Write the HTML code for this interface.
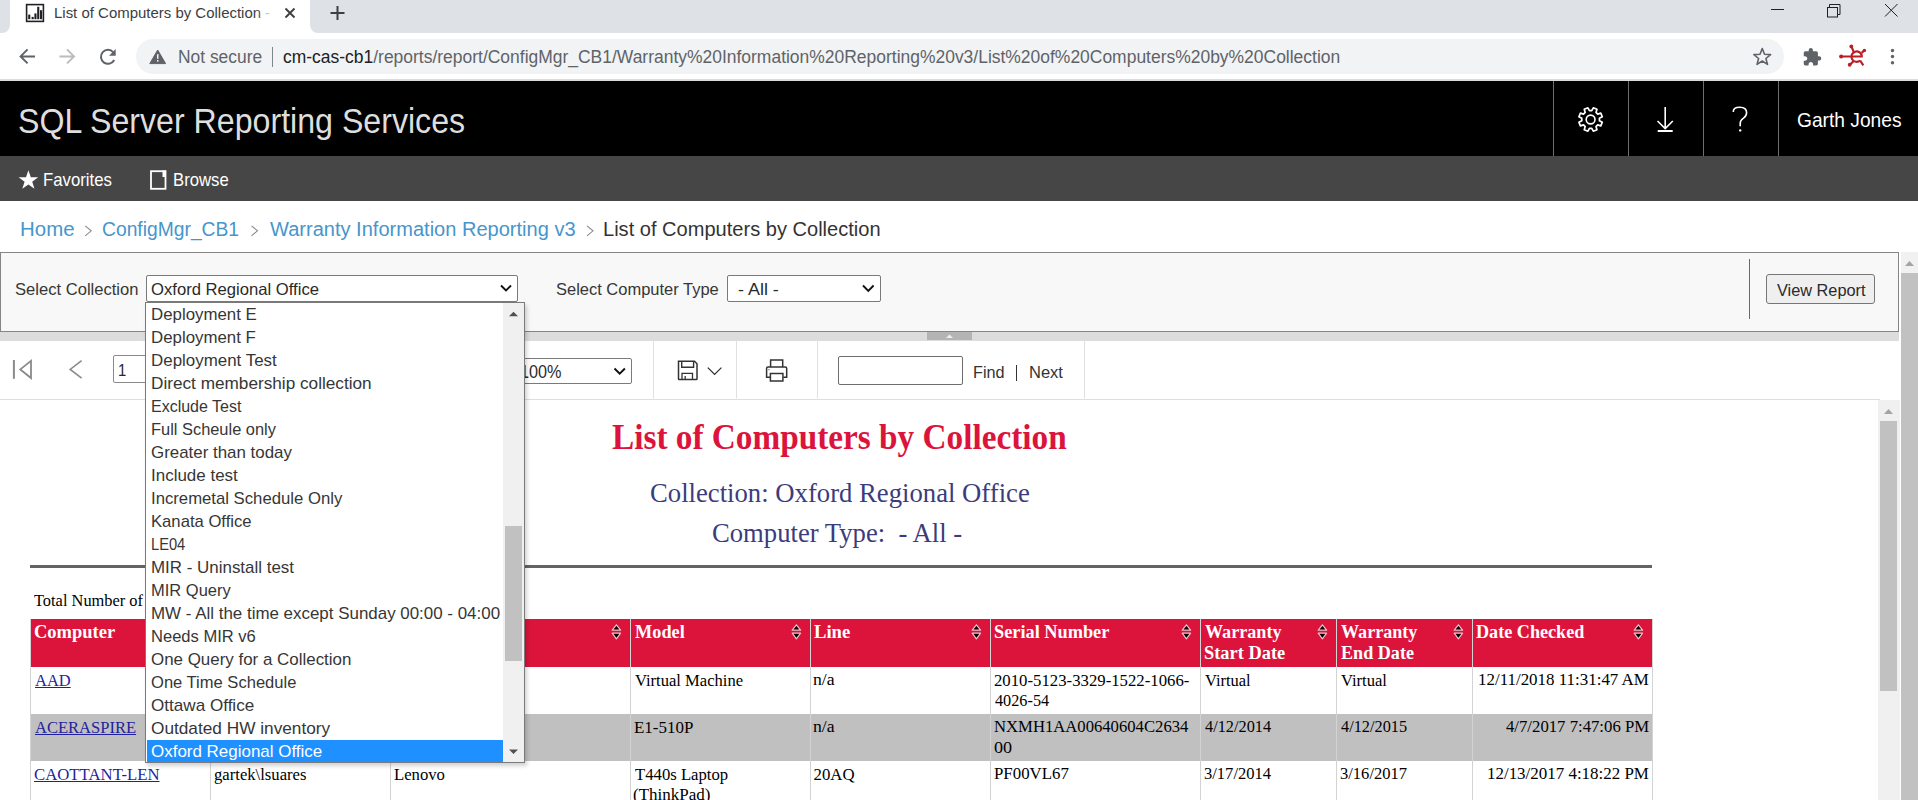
<!DOCTYPE html>
<html><head><meta charset="utf-8">
<style>
*{box-sizing:border-box;margin:0;padding:0}
html,body{width:1918px;height:800px;overflow:hidden;background:#fff;font-family:"Liberation Sans",sans-serif}
body{position:relative}
.a{position:absolute}
.t{position:absolute;white-space:pre;transform-origin:0 0}
svg{position:absolute;overflow:visible}
</style></head><body>

<!-- ===== Chrome tab strip ===== -->
<div class="a" style="left:0;top:0;width:1918px;height:34px;background:#fff"></div>
<div class="a" style="left:0;top:0;width:10px;height:33px;background:#dee1e6;border-bottom-right-radius:8px"></div>
<div class="a" style="left:310px;top:0;width:1608px;height:33px;background:#dee1e6;border-bottom-left-radius:8px"></div>
<!-- favicon -->
<svg style="left:0;top:0" width="60" height="30">
  <rect x="26.6" y="4.6" width="16.8" height="16.8" fill="none" stroke="#202124" stroke-width="1.6"/>
  <rect x="28.2" y="14.6" width="2.1" height="4.6" fill="#202124"/>
  <rect x="31.6" y="16.9" width="2.1" height="2.3" fill="#202124"/>
  <rect x="34.4" y="13.4" width="2.1" height="5.8" fill="#202124"/>
  <rect x="37.2" y="6.8" width="2.1" height="12.4" fill="#202124"/>
  <rect x="40.0" y="10.2" width="2.1" height="9" fill="#202124"/>
</svg>
<div class="t" style="left:54.44px;top:5.20px;font-family:'Liberation Sans',sans-serif;font-weight:400;font-size:15.55px;line-height:15.55px;color:#3c4043;transform:scaleX(0.9623);">List of Computers by Collection -</div>
<div class="a" style="left:257px;top:0;width:20px;height:30px;background:linear-gradient(90deg,rgba(255,255,255,0),#fff 75%)"></div>
<svg style="left:0;top:0" width="360" height="30">
  <path d="M285.5 8.5 L294.5 17.5 M294.5 8.5 L285.5 17.5" stroke="#3c4043" stroke-width="1.9" fill="none"/>
  <path d="M337.5 6 V20 M330.5 13 H344.5" stroke="#3c4043" stroke-width="2" fill="none"/>
</svg>
<!-- window controls -->
<svg style="left:1700px;top:0" width="218" height="30">
  <path d="M71 9.5 H84" stroke="#202124" stroke-width="1"/>
  <rect x="127.5" y="7.5" width="10" height="9.5" fill="none" stroke="#202124" stroke-width="1"/>
  <path d="M129.5 7.5 V4.5 H140 V14.5 H137.5" fill="none" stroke="#202124" stroke-width="1"/>
  <path d="M185 4 L197.5 16.5 M197.5 4 L185 16.5" stroke="#202124" stroke-width="1"/>
</svg>

<!-- ===== Toolbar ===== -->
<svg style="left:0;top:34px" width="140" height="46">
  <path d="M35 22.4 H21 M27.6 15.4 L20.6 22.4 L27.6 29.4" stroke="#5f6368" stroke-width="2" fill="none"/>
  <path d="M59.5 22.4 H73.5 M67 15.4 L74 22.4 L67 29.4" stroke="#babcbe" stroke-width="2" fill="none"/>
  <path d="M113.3 18.3 A7 7 0 1 0 114.2 26" stroke="#5f6368" stroke-width="2" fill="none"/>
  <path d="M109 21.8 L115.7 21.8 L115.7 15 Z" fill="#5f6368"/>
</svg>
<div class="a" style="left:136px;top:39px;width:1648px;height:34.5px;background:#f1f3f4;border-radius:17.25px"></div>
<svg style="left:140px;top:40px" width="40" height="30">
  <path d="M17.7 10 L25.6 23.6 L9.8 23.6 Z" fill="#5f6368" stroke="#5f6368" stroke-width="1" stroke-linejoin="round"/>
  <rect x="17" y="14.2" width="1.5" height="4.6" fill="#f1f3f4"/>
  <rect x="17" y="20" width="1.5" height="1.6" fill="#f1f3f4"/>
</svg>
<div class="t" style="left:177.68px;top:48.10px;font-family:'Liberation Sans',sans-serif;font-weight:400;font-size:18.9px;line-height:18.9px;color:#5f6368;transform:scaleX(0.9211);">Not secure</div>
<div class="a" style="left:271.5px;top:47px;width:1.3px;height:20px;background:#80868b"></div>
<div class="t" style="left:283.48px;top:48.10px;font-family:'Liberation Sans',sans-serif;font-weight:400;font-size:18.9px;line-height:18.9px;color:#202124;transform:scaleX(0.9243);">cm-cas-cb1<span style="color:#5f6368">/reports/report/ConfigMgr_CB1/Warranty%20Information%20Reporting%20v3/List%20of%20Computers%20by%20Collection</span></div>
<svg style="left:1745px;top:38px" width="173" height="40">
  <path d="M17.25 10.5 L19.5 16.3 L25.6 16.6 L20.9 20.5 L22.5 26.4 L17.25 23 L12 26.4 L13.6 20.5 L8.9 16.6 L15 16.3 Z" fill="none" stroke="#5f6368" stroke-width="1.6" stroke-linejoin="round"/>
  <path transform="translate(57.08,9.17) scale(0.833)" d="M20.5 11H19V7c0-1.1-.9-2-2-2h-4V3.5C13 2.12 11.88 1 10.5 1S8 2.12 8 3.5V5H4c-1.1 0-1.99.9-1.99 2v3.8H3.5c1.49 0 2.7 1.21 2.7 2.7s-1.21 2.7-2.7 2.7H2V20c0 1.1.9 2 2 2h3.8v-1.5c0-1.49 1.21-2.7 2.7-2.7 1.49 0 2.7 1.21 2.7 2.7V22H17c1.1 0 2-.9 2-2v-4h1.5c1.38 0 2.5-1.12 2.5-2.5S21.880 11 20.5 11z" fill="#5f6368"/>
  <g stroke="#b81f24" stroke-width="2.1" fill="none">
    <path d="M96.1 18.5 H116.8 A5.2 5.2 0 1 0 115.2 22.4"/>
    <path d="M106.3 8.4 L108.9 14.2"/>
    <path d="M116.6 14.9 L119.4 12.4"/>
    <path d="M104.7 26.75 L108.2 23.6"/>
    <path d="M115.2 22.55 L118.35 27.3"/>
  </g>
  <circle cx="96.1" cy="18.5" r="2" fill="#b81f24"/>
  <circle cx="106.3" cy="8.4" r="1.9" fill="#b81f24"/>
  <circle cx="104.7" cy="26.75" r="1.9" fill="#b81f24"/>
  <circle cx="119.4" cy="12.4" r="1.7" fill="#b81f24"/>
  <circle cx="147.5" cy="12.5" r="1.7" fill="#5f6368"/>
  <circle cx="147.5" cy="18.5" r="1.7" fill="#5f6368"/>
  <circle cx="147.5" cy="24.7" r="1.7" fill="#5f6368"/>
</svg>
<div class="a" style="left:0;top:78.5px;width:1918px;height:2px;background:#dcdcdc"></div>

<!-- ===== SSRS header ===== -->
<div class="a" style="left:0;top:80.5px;width:1918px;height:75.5px;background:#000"></div>
<div class="t" style="left:18.13px;top:103.60px;font-family:'Liberation Sans',sans-serif;font-weight:400;font-size:34.45px;line-height:34.45px;color:#dedede;transform:scaleX(0.9332);">SQL Server Reporting Services</div>
<div class="a" style="left:1553px;top:81px;width:1px;height:75px;background:#6e6e6e"></div>
<div class="a" style="left:1628px;top:81px;width:1px;height:75px;background:#6e6e6e"></div>
<div class="a" style="left:1703px;top:81px;width:1px;height:75px;background:#6e6e6e"></div>
<div class="a" style="left:1778px;top:81px;width:1px;height:75px;background:#6e6e6e"></div>
<svg style="left:1560px;top:90px" width="130" height="50">
  <g transform="translate(30.6,29.5)">
    <path d="M8.82 1.16 L11.69 2.70 L10.18 6.36 L7.06 5.42 L5.42 7.06 L6.36 10.18 L2.70 11.69 L1.16 8.82 L-1.16 8.82 L-2.70 11.69 L-6.36 10.18 L-5.42 7.06 L-7.06 5.42 L-10.18 6.36 L-11.69 2.70 L-8.82 1.16 L-8.82 -1.16 L-11.69 -2.70 L-10.18 -6.36 L-7.06 -5.42 L-5.42 -7.06 L-6.36 -10.18 L-2.70 -11.69 L-1.16 -8.82 L1.16 -8.82 L2.70 -11.69 L6.36 -10.18 L5.42 -7.06 L7.06 -5.42 L10.18 -6.36 L11.69 -2.70 L8.82 -1.16 Z" fill="none" stroke="#fff" stroke-width="1.7" stroke-linejoin="round"/>
    <circle r="4.4" fill="none" stroke="#fff" stroke-width="1.6"/>
  </g>
  <path d="M105.2 17 V38.5 M97.5 31 L105.2 38.6 L112.8 31" stroke="#fff" stroke-width="1.6" fill="none"/>
  <path d="M97.7 41 H112.7" stroke="#fff" stroke-width="2"/>
</svg>
<svg style="left:1725px;top:100px" width="30" height="40">
  <path d="M8.3 12 Q8 7.3 14.8 7.3 Q21.6 7.3 21.6 12.8 Q21.6 16 18.5 18.2 Q15.2 20.3 15.2 23.5 V26.3" fill="none" stroke="#fff" stroke-width="1.6"/>
  <circle cx="15.2" cy="30.4" r="1.2" fill="#fff"/>
</svg>
<div class="t" style="left:1797.02px;top:110.80px;font-family:'Liberation Sans',sans-serif;font-weight:400;font-size:19.62px;line-height:19.62px;color:#ffffff;transform:scaleX(0.9781);">Garth Jones</div>

<!-- ===== Nav bar ===== -->
<div class="a" style="left:0;top:156px;width:1918px;height:45px;background:#464646"></div>
<svg style="left:0;top:156px" width="240" height="45">
  <path d="M28.4 14.2 L30.8 21.3 L38.2 21.3 L32.2 25.7 L34.5 32.8 L28.4 28.4 L22.3 32.8 L24.6 25.7 L18.6 21.3 L26 21.3 Z" fill="#fff"/>
  <rect x="151" y="15.2" width="14.5" height="17.6" fill="none" stroke="#fff" stroke-width="1.8"/>
  <rect x="162.5" y="14.5" width="3.5" height="6.5" fill="#fff"/>
</svg>
<div class="t" style="left:42.70px;top:170.80px;font-family:'Liberation Sans',sans-serif;font-weight:400;font-size:18.6px;line-height:18.6px;color:#ffffff;transform:scaleX(0.9000);">Favorites</div>
<div class="t" style="left:172.80px;top:170.80px;font-family:'Liberation Sans',sans-serif;font-weight:400;font-size:18.6px;line-height:18.6px;color:#ffffff;transform:scaleX(0.8983);">Browse</div>

<!-- ===== Breadcrumb ===== -->
<div class="t" style="left:19.63px;top:219.80px;font-family:'Liberation Sans',sans-serif;font-weight:400;font-size:19.77px;line-height:19.77px;color:#4696cc;transform:scaleX(1.0340);">Home</div>
<div class="t" style="left:102.03px;top:219.80px;font-family:'Liberation Sans',sans-serif;font-weight:400;font-size:19.77px;line-height:19.77px;color:#4696cc;transform:scaleX(0.9748);">ConfigMgr_CB1</div>
<div class="t" style="left:269.80px;top:219.80px;font-family:'Liberation Sans',sans-serif;font-weight:400;font-size:19.77px;line-height:19.77px;color:#4696cc;transform:scaleX(1.0140);">Warranty Information Reporting v3</div>
<div class="t" style="left:603.37px;top:219.80px;font-family:'Liberation Sans',sans-serif;font-weight:400;font-size:19.77px;line-height:19.77px;color:#333333;transform:scaleX(1.0148);">List of Computers by Collection</div>
<svg style="left:0;top:220px" width="620" height="20">
  <g stroke="#8a8a8a" stroke-width="1.1" fill="none">
    <path d="M85.2 5.8 L91.2 10.8 L85.2 15.8"/>
    <path d="M251.5 5.8 L257.5 10.8 L251.5 15.8"/>
    <path d="M587 5.8 L593 10.8 L587 15.8"/>
  </g>
</svg>

<!-- ===== Parameter panel ===== -->
<div class="a" style="left:0;top:252px;width:1899px;height:80px;background:#f8f8f8;border:1px solid #858585"></div>
<div class="t" style="left:14.61px;top:282.20px;font-family:'Liberation Sans',sans-serif;font-weight:400;font-size:16.72px;line-height:16.72px;color:#363636;transform:scaleX(0.9926);">Select Collection</div>
<div class="a" style="left:145.5px;top:275px;width:372.5px;height:26.5px;background:#fff;border:1px solid #7a7a7a;border-radius:2px"></div>
<div class="t" style="left:150.70px;top:282.40px;font-family:'Liberation Sans',sans-serif;font-weight:400;font-size:16.72px;line-height:16.72px;color:#2a2a2a;transform:scaleX(0.9958);">Oxford Regional Office</div>
<div class="t" style="left:556.21px;top:282.20px;font-family:'Liberation Sans',sans-serif;font-weight:400;font-size:16.72px;line-height:16.72px;color:#363636;transform:scaleX(0.9865);">Select Computer Type</div>
<div class="a" style="left:727px;top:275px;width:154px;height:27px;background:#fff;border:1px solid #7a7a7a;border-radius:2px"></div>
<div class="t" style="left:737.63px;top:282.40px;font-family:'Liberation Sans',sans-serif;font-weight:400;font-size:16.72px;line-height:16.72px;color:#2a2a2a;transform:scaleX(1.0730);">- All -</div>
<svg style="left:0;top:280px" width="900" height="20">
  <path d="M501 5.5 L506 10.5 L511 5.5" stroke="#111" stroke-width="1.9" fill="none"/>
  <path d="M863 5.5 L868.3 10.8 L873.6 5.5" stroke="#111" stroke-width="1.9" fill="none"/>
</svg>
<div class="a" style="left:1749px;top:259px;width:1px;height:60px;background:#6a6a6a"></div>
<div class="a" style="left:1766px;top:274.3px;width:109px;height:29.5px;background:#efefef;border:1px solid #767676;border-radius:3px"></div>
<div class="t" style="left:1776.80px;top:281.70px;font-family:'Liberation Sans',sans-serif;font-weight:400;font-size:17.01px;line-height:17.01px;color:#2a2a2a;transform:scaleX(0.9587);">View Report</div>
<div class="a" style="left:0;top:331.5px;width:1899px;height:9.5px;background:#dcdcdc"></div>
<div class="a" style="left:927px;top:332px;width:45px;height:8px;background:#b4b4b4"></div>
<svg style="left:927px;top:332px" width="45" height="8"><path d="M19 6 L22.5 2.5 L26 6 Z" fill="#eee"/></svg>

<!-- outer scrollbar -->
<div class="a" style="left:1900.5px;top:252px;width:17.5px;height:548px;background:#f1f1f1"></div>
<svg style="left:1900px;top:252px" width="18" height="20"><path d="M5 14 L9.5 9 L14 14 Z" fill="#a3a3a3"/></svg>
<div class="a" style="left:1901px;top:273px;width:17px;height:527px;background:#c1c1c1"></div>

<!-- ===== Report toolbar ===== -->
<div class="a" style="left:0;top:341px;width:1899px;height:58px;background:#fff"></div>
<svg style="left:0;top:340px" width="1100" height="60">
  <rect x="12.9" y="20" width="2" height="18.8" fill="#8a8a8a"/>
  <path d="M31 20.8 V38 L20.3 29.4 Z" fill="none" stroke="#8a8a8a" stroke-width="1.8" stroke-linejoin="miter"/>
  <path d="M81.6 20.6 L70.2 29.4 L81.6 38.2" fill="none" stroke="#8a8a8a" stroke-width="1.6"/>
  <g stroke="#e0e0e0" stroke-width="1">
    <path d="M653.5 0 V58.5"/><path d="M736.5 0 V58.5"/><path d="M817.5 0 V58.5"/><path d="M1084.5 0 V58.5"/>
  </g>
  <!-- save -->
  <path d="M678.5 21.2 H694.5 L697 23.7 V38.9 Q697 39.6 696.3 39.6 H679.2 Q678.5 39.6 678.5 38.9 Z" fill="none" stroke="#333" stroke-width="1.5"/>
  <path d="M681.7 21.2 V27.2 H693.6 V21.2" fill="none" stroke="#333" stroke-width="1.4"/>
  <path d="M682 39.6 V33.4 H692.5 V39.6 M685.2 39.6 V36" fill="none" stroke="#333" stroke-width="1.3"/>
  <path d="M707.8 27.6 L714.6 34.4 L721.4 27.6" fill="none" stroke="#333" stroke-width="1.3"/>
  <!-- print -->
  <path d="M770.6 27 V19.9 H782.7 V27" fill="none" stroke="#333" stroke-width="1.5"/>
  <path d="M770 37.2 H766.6 V28.4 Q766.6 27 768 27 H785.3 Q786.7 27 786.7 28.4 V37.2 H783.3" fill="none" stroke="#333" stroke-width="1.5"/>
  <rect x="770.4" y="33.5" width="12.5" height="7.5" fill="none" stroke="#333" stroke-width="1.5"/>
  <rect x="768.5" y="29.2" width="1" height="1" fill="#333"/>
</svg>
<div class="a" style="left:113px;top:355.4px;width:60px;height:27.4px;background:#fff;border:1px solid #8a8a8a;border-radius:2px"></div>
<div class="t" style="left:117.87px;top:362.80px;font-family:'Liberation Sans',sans-serif;font-weight:400;font-size:16.86px;line-height:16.86px;color:#2a2a2a;transform:scaleX(0.8812);">1</div>
<div class="a" style="left:440px;top:358.3px;width:191.7px;height:25.6px;background:#fff;border:1px solid #7a7a7a;border-radius:2px"></div>
<div class="t" style="left:519.58px;top:364.00px;font-family:'Liberation Sans',sans-serif;font-weight:400;font-size:17.73px;line-height:17.73px;color:#2a2a2a;transform:scaleX(0.9159);">100%</div>
<svg style="left:600px;top:360px" width="40" height="20"><path d="M614.5 8.5 L619.7 13.7 L624.9 8.5" transform="translate(-600,0)" stroke="#111" stroke-width="1.9" fill="none"/></svg>
<div class="a" style="left:838px;top:356px;width:125px;height:29px;background:#fff;border:1px solid #6d6d6d;border-radius:2px"></div>
<div class="t" style="left:972.65px;top:363.70px;font-family:'Liberation Sans',sans-serif;font-weight:400;font-size:17.01px;line-height:17.01px;color:#333333;transform:scaleX(0.9548);">Find</div>
<div class="a" style="left:1016px;top:365.3px;width:1.3px;height:16.2px;background:#333"></div>
<div class="t" style="left:1028.73px;top:363.70px;font-family:'Liberation Sans',sans-serif;font-weight:400;font-size:17.01px;line-height:17.01px;color:#333333;transform:scaleX(0.9706);">Next</div>
<div class="a" style="left:0;top:398.5px;width:1880px;height:1px;background:#dedede"></div>

<!-- inner scrollbar -->
<div class="a" style="left:1878px;top:400px;width:21.5px;height:400px;background:#f0f0f0"></div>
<svg style="left:1878px;top:400px" width="22" height="20"><path d="M6 14 L10.5 9 L15 14 Z" fill="#a3a3a3"/></svg>
<div class="a" style="left:1880.4px;top:421.2px;width:17px;height:269.8px;background:#c1c1c1"></div>

<!-- ===== Report body ===== -->
<div class="t" style="left:611.57px;top:419.50px;font-family:'Liberation Serif',serif;font-weight:700;font-size:35.88px;line-height:35.88px;color:#dc143c;transform:scaleX(0.9274);">List of Computers by Collection</div>
<div class="t" style="left:650.03px;top:480.00px;font-family:'Liberation Serif',serif;font-weight:400;font-size:27.48px;line-height:27.48px;color:#3c3c7c;transform:scaleX(0.9717);">Collection: Oxford Regional Office</div>
<div class="t" style="left:711.53px;top:519.50px;font-family:'Liberation Serif',serif;font-weight:400;font-size:27.48px;line-height:27.48px;color:#3c3c7c;transform:scaleX(0.9707);white-space:pre;">Computer Type:  - All -</div>
<div class="a" style="left:30px;top:564.5px;width:1622px;height:3px;background:#646464"></div>
<div class="t" style="left:34.30px;top:593.10px;font-family:'Liberation Serif',serif;font-weight:400;font-size:16.79px;line-height:16.79px;color:#000000;transform:scaleX(0.9768);">Total Number of</div>
<!-- table -->
<div class="a" style="left:30px;top:619px;width:1622.5px;height:47.5px;background:#dc143c"></div>
<div class="a" style="left:30px;top:714px;width:1622.5px;height:47px;background:#c0c0c0"></div>
<div id="cols"></div>
<div class="a" style="left:30px;top:619px;width:1px;height:181px;background:#d3d3d3"></div><div class="a" style="left:210px;top:619px;width:1px;height:181px;background:#d3d3d3"></div><div class="a" style="left:390px;top:619px;width:1px;height:181px;background:#d3d3d3"></div><div class="a" style="left:630px;top:619px;width:1px;height:181px;background:#d3d3d3"></div><div class="a" style="left:810px;top:619px;width:1px;height:181px;background:#d3d3d3"></div><div class="a" style="left:990px;top:619px;width:1px;height:181px;background:#d3d3d3"></div><div class="a" style="left:1200px;top:619px;width:1px;height:181px;background:#d3d3d3"></div><div class="a" style="left:1336px;top:619px;width:1px;height:181px;background:#d3d3d3"></div><div class="a" style="left:1472px;top:619px;width:1px;height:181px;background:#d3d3d3"></div><div class="a" style="left:1652px;top:619px;width:1px;height:181px;background:#d3d3d3"></div>
<div class="t" style="left:34.06px;top:624.30px;font-family:'Liberation Serif',serif;font-weight:700;font-size:17.86px;line-height:17.86px;color:#ffffff;transform:scaleX(1.0351);">Computer</div>
<div class="t" style="left:634.80px;top:624.00px;font-family:'Liberation Serif',serif;font-weight:700;font-size:17.86px;line-height:17.86px;color:#ffffff;transform:scaleX(1.0229);">Model</div>
<div class="t" style="left:814.30px;top:624.00px;font-family:'Liberation Serif',serif;font-weight:700;font-size:17.86px;line-height:17.86px;color:#ffffff;transform:scaleX(1.0441);">Line</div>
<div class="t" style="left:993.68px;top:624.00px;font-family:'Liberation Serif',serif;font-weight:700;font-size:17.86px;line-height:17.86px;color:#ffffff;transform:scaleX(1.0241);">Serial Number</div>
<div class="t" style="left:1204.90px;top:624.00px;font-family:'Liberation Serif',serif;font-weight:700;font-size:17.86px;line-height:17.86px;color:#ffffff;transform:scaleX(1.0147);">Warranty</div>
<div class="t" style="left:1203.87px;top:644.70px;font-family:'Liberation Serif',serif;font-weight:700;font-size:17.86px;line-height:17.86px;color:#ffffff;transform:scaleX(1.0295);">Start Date</div>
<div class="t" style="left:1341.00px;top:624.00px;font-family:'Liberation Serif',serif;font-weight:700;font-size:17.86px;line-height:17.86px;color:#ffffff;transform:scaleX(1.0133);">Warranty</div>
<div class="t" style="left:1341.00px;top:644.70px;font-family:'Liberation Serif',serif;font-weight:700;font-size:17.86px;line-height:17.86px;color:#ffffff;transform:scaleX(1.0139);">End Date</div>
<div class="t" style="left:1476.30px;top:624.00px;font-family:'Liberation Serif',serif;font-weight:700;font-size:17.86px;line-height:17.86px;color:#ffffff;transform:scaleX(1.0159);">Date Checked</div>
<svg style="left:0;top:615px" width="1700" height="30"><path d="M192.2 15.2 L196.4 9.8 L200.6 15.2 Z" fill="#000" stroke="#f3c0c8" stroke-width="1.2" stroke-linejoin="round"/><path d="M192.2 18.2 L196.4 23.8 L200.6 18.2 Z" fill="#000" stroke="#f3c0c8" stroke-width="1.2" stroke-linejoin="round"/><path d="M372.2 15.2 L376.4 9.8 L380.6 15.2 Z" fill="#000" stroke="#f3c0c8" stroke-width="1.2" stroke-linejoin="round"/><path d="M372.2 18.2 L376.4 23.8 L380.6 18.2 Z" fill="#000" stroke="#f3c0c8" stroke-width="1.2" stroke-linejoin="round"/><path d="M612.2 15.2 L616.4 9.8 L620.6 15.2 Z" fill="#000" stroke="#f3c0c8" stroke-width="1.2" stroke-linejoin="round"/><path d="M612.2 18.2 L616.4 23.8 L620.6 18.2 Z" fill="#000" stroke="#f3c0c8" stroke-width="1.2" stroke-linejoin="round"/><path d="M792.2 15.2 L796.4 9.8 L800.6 15.2 Z" fill="#000" stroke="#f3c0c8" stroke-width="1.2" stroke-linejoin="round"/><path d="M792.2 18.2 L796.4 23.8 L800.6 18.2 Z" fill="#000" stroke="#f3c0c8" stroke-width="1.2" stroke-linejoin="round"/><path d="M972.2 15.2 L976.4 9.8 L980.6 15.2 Z" fill="#000" stroke="#f3c0c8" stroke-width="1.2" stroke-linejoin="round"/><path d="M972.2 18.2 L976.4 23.8 L980.6 18.2 Z" fill="#000" stroke="#f3c0c8" stroke-width="1.2" stroke-linejoin="round"/><path d="M1182.2 15.2 L1186.4 9.8 L1190.6 15.2 Z" fill="#000" stroke="#f3c0c8" stroke-width="1.2" stroke-linejoin="round"/><path d="M1182.2 18.2 L1186.4 23.8 L1190.6 18.2 Z" fill="#000" stroke="#f3c0c8" stroke-width="1.2" stroke-linejoin="round"/><path d="M1318.2 15.2 L1322.4 9.8 L1326.6 15.2 Z" fill="#000" stroke="#f3c0c8" stroke-width="1.2" stroke-linejoin="round"/><path d="M1318.2 18.2 L1322.4 23.8 L1326.6 18.2 Z" fill="#000" stroke="#f3c0c8" stroke-width="1.2" stroke-linejoin="round"/><path d="M1454.2 15.2 L1458.4 9.8 L1462.6 15.2 Z" fill="#000" stroke="#f3c0c8" stroke-width="1.2" stroke-linejoin="round"/><path d="M1454.2 18.2 L1458.4 23.8 L1462.6 18.2 Z" fill="#000" stroke="#f3c0c8" stroke-width="1.2" stroke-linejoin="round"/><path d="M1634.2 15.2 L1638.4 9.8 L1642.6 15.2 Z" fill="#000" stroke="#f3c0c8" stroke-width="1.2" stroke-linejoin="round"/><path d="M1634.2 18.2 L1638.4 23.8 L1642.6 18.2 Z" fill="#000" stroke="#f3c0c8" stroke-width="1.2" stroke-linejoin="round"/></svg>
<div class="t" style="left:35.00px;top:672.80px;font-family:'Liberation Serif',serif;font-weight:400;font-size:16.79px;line-height:16.79px;color:#1f1f9f;transform:scaleX(0.9806);text-decoration:underline;">AAD</div>
<div class="t" style="left:635.00px;top:672.60px;font-family:'Liberation Serif',serif;font-weight:400;font-size:16.79px;line-height:16.79px;color:#000000;transform:scaleX(0.9881);">Virtual Machine</div>
<div class="t" style="left:813.45px;top:672.30px;font-family:'Liberation Serif',serif;font-weight:400;font-size:16.79px;line-height:16.79px;color:#000000;transform:scaleX(1.0526);">n/a</div>
<div class="t" style="left:993.70px;top:672.50px;font-family:'Liberation Serif',serif;font-weight:400;font-size:16.79px;line-height:16.79px;color:#000000;transform:scaleX(0.9979);">2010-5123-3329-1522-1066-</div>
<div class="t" style="left:994.70px;top:692.50px;font-family:'Liberation Serif',serif;font-weight:400;font-size:16.79px;line-height:16.79px;color:#000000;transform:scaleX(0.9679);">4026-54</div>
<div class="t" style="left:1204.90px;top:672.50px;font-family:'Liberation Serif',serif;font-weight:400;font-size:16.79px;line-height:16.79px;color:#000000;transform:scaleX(0.9804);">Virtual</div>
<div class="t" style="left:1341.00px;top:672.50px;font-family:'Liberation Serif',serif;font-weight:400;font-size:16.79px;line-height:16.79px;color:#000000;transform:scaleX(0.9870);">Virtual</div>
<div class="t" style="left:1477.98px;top:672.40px;font-family:'Liberation Serif',serif;font-weight:400;font-size:16.79px;line-height:16.79px;color:#000000;transform:scaleX(1.0090);">12/11/2018 11:31:47 AM</div>
<div class="t" style="left:35.00px;top:719.60px;font-family:'Liberation Serif',serif;font-weight:400;font-size:16.79px;line-height:16.79px;color:#1f1f9f;transform:scaleX(0.9853);text-decoration:underline;">ACERASPIRE</div>
<div class="t" style="left:633.59px;top:719.50px;font-family:'Liberation Serif',serif;font-weight:400;font-size:16.79px;line-height:16.79px;color:#000000;transform:scaleX(1.0105);">E1-510P</div>
<div class="t" style="left:813.45px;top:719.30px;font-family:'Liberation Serif',serif;font-weight:400;font-size:16.79px;line-height:16.79px;color:#000000;transform:scaleX(1.0526);">n/a</div>
<div class="t" style="left:993.71px;top:719.30px;font-family:'Liberation Serif',serif;font-weight:400;font-size:16.79px;line-height:16.79px;color:#000000;transform:scaleX(0.9928);">NXMH1AA00640604C2634</div>
<div class="t" style="left:993.62px;top:739.50px;font-family:'Liberation Serif',serif;font-weight:400;font-size:16.79px;line-height:16.79px;color:#000000;transform:scaleX(1.0800);">00</div>
<div class="t" style="left:1204.90px;top:719.30px;font-family:'Liberation Serif',serif;font-weight:400;font-size:16.79px;line-height:16.79px;color:#000000;transform:scaleX(0.9706);">4/12/2014</div>
<div class="t" style="left:1341.00px;top:719.30px;font-family:'Liberation Serif',serif;font-weight:400;font-size:16.79px;line-height:16.79px;color:#000000;transform:scaleX(0.9706);">4/12/2015</div>
<div class="t" style="left:1506.00px;top:719.30px;font-family:'Liberation Serif',serif;font-weight:400;font-size:16.79px;line-height:16.79px;color:#000000;transform:scaleX(0.9965);">4/7/2017 7:47:06 PM</div>
<div class="t" style="left:34.00px;top:766.90px;font-family:'Liberation Serif',serif;font-weight:400;font-size:16.79px;line-height:16.79px;color:#1f1f9f;transform:scaleX(0.9984);text-decoration:underline;">CAOTTANT-LEN</div>
<div class="t" style="left:213.61px;top:766.70px;font-family:'Liberation Serif',serif;font-weight:400;font-size:16.79px;line-height:16.79px;color:#000000;transform:scaleX(0.9924);">gartek\lsuares</div>
<div class="t" style="left:393.81px;top:766.70px;font-family:'Liberation Serif',serif;font-weight:400;font-size:16.79px;line-height:16.79px;color:#000000;transform:scaleX(0.9940);">Lenovo</div>
<div class="t" style="left:634.50px;top:767.00px;font-family:'Liberation Serif',serif;font-weight:400;font-size:16.79px;line-height:16.79px;color:#000000;transform:scaleX(0.9946);">T440s Laptop</div>
<div class="t" style="left:632.99px;top:787.00px;font-family:'Liberation Serif',serif;font-weight:400;font-size:16.79px;line-height:16.79px;color:#000000;transform:scaleX(1.0133);">(ThinkPad)</div>
<div class="t" style="left:813.50px;top:766.70px;font-family:'Liberation Serif',serif;font-weight:400;font-size:16.79px;line-height:16.79px;color:#000000;transform:scaleX(1.0000);">20AQ</div>
<div class="t" style="left:993.70px;top:766.30px;font-family:'Liberation Serif',serif;font-weight:400;font-size:16.79px;line-height:16.79px;color:#000000;transform:scaleX(1.0027);">PF00VL67</div>
<div class="t" style="left:1203.91px;top:766.30px;font-family:'Liberation Serif',serif;font-weight:400;font-size:16.79px;line-height:16.79px;color:#000000;transform:scaleX(0.9851);">3/17/2014</div>
<div class="t" style="left:1340.01px;top:766.30px;font-family:'Liberation Serif',serif;font-weight:400;font-size:16.79px;line-height:16.79px;color:#000000;transform:scaleX(0.9851);">3/16/2017</div>
<div class="t" style="left:1486.98px;top:766.30px;font-family:'Liberation Serif',serif;font-weight:400;font-size:16.79px;line-height:16.79px;color:#000000;transform:scaleX(1.0095);">12/13/2017 4:18:22 PM</div>

<!-- ===== Dropdown list ===== -->
<div class="a" style="left:145px;top:301.7px;width:379.5px;height:461.5px;background:#fff;border:1px solid #7a7a7a;box-shadow:2px 3px 4px rgba(0,0,0,0.18)"></div>
<div class="a" style="left:146.5px;top:739.8px;width:356.5px;height:22.3px;background:#1e90ff"></div>
<div class="t" style="left:150.82px;top:305.80px;font-family:'Liberation Sans',sans-serif;font-weight:400;font-size:17.15px;line-height:17.15px;color:#363636;transform:scaleX(0.9830);">Deployment E</div>
<div class="t" style="left:150.82px;top:328.80px;font-family:'Liberation Sans',sans-serif;font-weight:400;font-size:17.15px;line-height:17.15px;color:#363636;transform:scaleX(0.9829);">Deployment F</div>
<div class="t" style="left:150.81px;top:351.80px;font-family:'Liberation Sans',sans-serif;font-weight:400;font-size:17.15px;line-height:17.15px;color:#363636;transform:scaleX(0.9873);">Deployment Test</div>
<div class="t" style="left:150.80px;top:374.80px;font-family:'Liberation Sans',sans-serif;font-weight:400;font-size:17.15px;line-height:17.15px;color:#363636;transform:scaleX(1.0028);">Direct membership collection</div>
<div class="t" style="left:150.87px;top:397.80px;font-family:'Liberation Sans',sans-serif;font-weight:400;font-size:17.15px;line-height:17.15px;color:#363636;transform:scaleX(0.9333);">Exclude Test</div>
<div class="t" style="left:150.84px;top:420.80px;font-family:'Liberation Sans',sans-serif;font-weight:400;font-size:17.15px;line-height:17.15px;color:#363636;transform:scaleX(0.9569);">Full Scheule only</div>
<div class="t" style="left:150.81px;top:443.80px;font-family:'Liberation Sans',sans-serif;font-weight:400;font-size:17.15px;line-height:17.15px;color:#363636;transform:scaleX(0.9859);">Greater than today</div>
<div class="t" style="left:150.81px;top:466.80px;font-family:'Liberation Sans',sans-serif;font-weight:400;font-size:17.15px;line-height:17.15px;color:#363636;transform:scaleX(0.9897);">Include test</div>
<div class="t" style="left:150.83px;top:489.80px;font-family:'Liberation Sans',sans-serif;font-weight:400;font-size:17.15px;line-height:17.15px;color:#363636;transform:scaleX(0.9744);">Incremetal Schedule Only</div>
<div class="t" style="left:150.83px;top:512.80px;font-family:'Liberation Sans',sans-serif;font-weight:400;font-size:17.15px;line-height:17.15px;color:#363636;transform:scaleX(0.9716);">Kanata Office</div>
<div class="t" style="left:150.94px;top:535.80px;font-family:'Liberation Sans',sans-serif;font-weight:400;font-size:17.15px;line-height:17.15px;color:#363636;transform:scaleX(0.8564);">LE04</div>
<div class="t" style="left:150.81px;top:558.80px;font-family:'Liberation Sans',sans-serif;font-weight:400;font-size:17.15px;line-height:17.15px;color:#363636;transform:scaleX(0.9875);">MIR - Uninstall test</div>
<div class="t" style="left:150.84px;top:581.80px;font-family:'Liberation Sans',sans-serif;font-weight:400;font-size:17.15px;line-height:17.15px;color:#363636;transform:scaleX(0.9622);">MIR Query</div>
<div class="t" style="left:150.81px;top:604.80px;font-family:'Liberation Sans',sans-serif;font-weight:400;font-size:17.15px;line-height:17.15px;color:#363636;transform:scaleX(0.9875);">MW - All the time except Sunday 00:00 - 04:00</div>
<div class="t" style="left:150.84px;top:627.80px;font-family:'Liberation Sans',sans-serif;font-weight:400;font-size:17.15px;line-height:17.15px;color:#363636;transform:scaleX(0.9645);">Needs MIR v6</div>
<div class="t" style="left:150.81px;top:650.80px;font-family:'Liberation Sans',sans-serif;font-weight:400;font-size:17.15px;line-height:17.15px;color:#363636;transform:scaleX(0.9876);">One Query for a Collection</div>
<div class="t" style="left:150.83px;top:673.80px;font-family:'Liberation Sans',sans-serif;font-weight:400;font-size:17.15px;line-height:17.15px;color:#363636;transform:scaleX(0.9658);">One Time Schedule</div>
<div class="t" style="left:150.80px;top:696.80px;font-family:'Liberation Sans',sans-serif;font-weight:400;font-size:17.15px;line-height:17.15px;color:#363636;transform:scaleX(0.9971);">Ottawa Office</div>
<div class="t" style="left:150.79px;top:719.80px;font-family:'Liberation Sans',sans-serif;font-weight:400;font-size:17.15px;line-height:17.15px;color:#363636;transform:scaleX(1.0056);">Outdated HW inventory</div>
<div class="t" style="left:150.81px;top:742.80px;font-family:'Liberation Sans',sans-serif;font-weight:400;font-size:17.15px;line-height:17.15px;color:#ffffff;transform:scaleX(0.9895);">Oxford Regional Office</div>
<div class="a" style="left:503px;top:302.7px;width:20.5px;height:459.5px;background:#f0f0f0"></div>
<svg style="left:503px;top:302px" width="21" height="462">
  <path d="M6 14.3 L10.5 9.8 L15 14.3 Z" fill="#505050"/>
  <path d="M6 447.5 L10.5 452 L15 447.5 Z" fill="#505050"/>
</svg>
<div class="a" style="left:505.2px;top:526.4px;width:17px;height:134.5px;background:#c1c1c1"></div>

</body></html>
